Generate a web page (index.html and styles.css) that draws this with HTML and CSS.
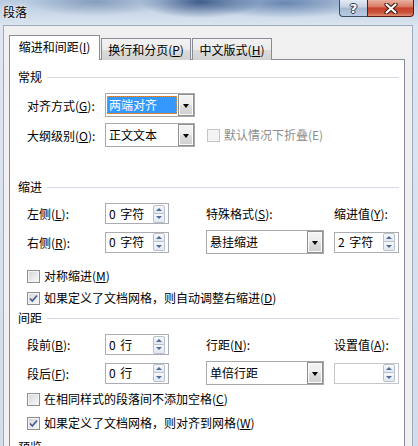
FILE: index.html
```html
<!DOCTYPE html>
<html lang="zh-CN">
<head>
<meta charset="utf-8">
<title>段落</title>
<link rel="stylesheet" href="styles.css">
</head>
<body>
<div class="window">
  <div class="titlebar">
    <span class="title">段落</span>
    <div class="caption-btns">
      <div class="cbtn help">?</div>
      <div class="cbtn close">
        <svg width="14" height="11" viewBox="0 0 14 11"><path d="M2.5 1.5 L11.5 9.5 M11.5 1.5 L2.5 9.5" stroke="#3a1810" stroke-width="4.2" stroke-linecap="round"/><path d="M2.5 1.5 L11.5 9.5 M11.5 1.5 L2.5 9.5" stroke="#ffffff" stroke-width="2.2" stroke-linecap="round"/></svg>
      </div>
    </div>
  </div>
  <div class="client">
    <div class="tabs">
      <div class="tab active">缩进和间距(<u>I</u>)</div>
      <div class="tab t2">换行和分页(<u>P</u>)</div>
      <div class="tab t3">中文版式(<u>H</u>)</div>
    </div>
    <div class="panel">
      <div class="sec-head h1"><span>常规</span><i class="rule"></i></div>
      <div class="rows">
        <div class="row r1">
          <span class="lbl">对齐方式(<u>G</u>):</span>
          <div class="combo w90"><span class="sel">两端对齐</span><span class="dd"><i class="tri"></i></span></div>
        </div>
        <div class="row r2">
          <span class="lbl">大纲级别(<u>O</u>):</span>
          <div class="combo w90"><span class="val">正文文本</span><span class="dd"><i class="tri"></i></span></div>
          <span class="cb disabled"></span><span class="cbtext dis">默认情况下折叠(E)</span>
        </div>
      </div>

      <div class="sec-head h2"><span>缩进</span><i class="rule"></i></div>
      <div class="rows">
        <div class="grid g1">
          <span class="lbl c1">左侧(<u>L</u>):</span>
          <div class="spin c2"><span class="val">0 字符</span><span class="sbs"><span class="sb"><i class="up"></i></span><span class="sb"><i class="down"></i></span></span></div>
          <span class="lbl c4">特殊格式(<u>S</u>):</span>
          <span class="lbl c6">缩进值(<u>Y</u>):</span>
          <span class="lbl c1">右侧(<u>R</u>):</span>
          <div class="spin c2"><span class="val">0 字符</span><span class="sbs"><span class="sb"><i class="up"></i></span><span class="sb"><i class="down"></i></span></span></div>
          <div class="combo c4 w118"><span class="val">悬挂缩进</span><span class="dd"><i class="tri"></i></span></div>
          <div class="spin c6"><span class="val">2 字符</span><span class="sbs"><span class="sb"><i class="up"></i></span><span class="sb"><i class="down"></i></span></span></div>
        </div>
        <div class="cbrow m14"><span class="cb"></span><span class="cbtext">对称缩进(<u>M</u>)</span></div>
        <div class="cbrow m6"><span class="cb checked"><svg width="11" height="11" viewBox="0 0 11 11"><path d="M2 5.5 L4.3 8 L9 2.5" fill="none" stroke="#4a5f92" stroke-width="1.8"/></svg></span><span class="cbtext">如果定义了文档网格，则自动调整右缩进(<u>D</u>)</span></div>
      </div>

      <div class="sec-head h3"><span>间距</span><i class="rule"></i></div>
      <div class="rows">
        <div class="grid g2">
          <span class="lbl c1">段前(<u>B</u>):</span>
          <div class="spin c2"><span class="val">0 行</span><span class="sbs"><span class="sb"><i class="up"></i></span><span class="sb"><i class="down"></i></span></span></div>
          <span class="lbl c4">行距(<u>N</u>):</span>
          <span class="lbl c6">设置值(<u>A</u>):</span>
          <span class="lbl c1">段后(<u>F</u>):</span>
          <div class="spin c2"><span class="val">0 行</span><span class="sbs"><span class="sb"><i class="up"></i></span><span class="sb"><i class="down"></i></span></span></div>
          <div class="combo c4 w118"><span class="val">单倍行距</span><span class="dd"><i class="tri"></i></span></div>
          <div class="spin c6 empty"><span class="val"></span><span class="sbs"><span class="sb"><i class="up"></i></span><span class="sb"><i class="down"></i></span></span></div>
        </div>
        <div class="cbrow m6"><span class="cb"></span><span class="cbtext">在相同样式的段落间不添加空格(<u>C</u>)</span></div>
        <div class="cbrow m8"><span class="cb checked"><svg width="11" height="11" viewBox="0 0 11 11"><path d="M2 5.5 L4.3 8 L9 2.5" fill="none" stroke="#4a5f92" stroke-width="1.8"/></svg></span><span class="cbtext">如果定义了文档网格，则对齐到网格(<u>W</u>)</span></div>
      </div>

      <div class="sec-head h4"><span>预览</span><i class="rule"></i></div>
    </div>
  </div>
</div>
</body>
</html>
```
FILE: styles.css
```css
* { box-sizing: border-box; }

body {
  margin: 0;
  font-family: "Noto Sans CJK SC", "Microsoft YaHei", sans-serif;
  font-size: 12px;
  line-height: 16px;
  color: #000;
}

u { text-decoration: underline; text-underline-offset: 1px; }

.window {
  width: 418px;
  height: 446px;
  overflow: hidden;
  background-color: #cdd9e8;
  background-image:
    radial-gradient(ellipse 60px 16px at 200px 2px, rgba(40, 72, 125, 0.85), rgba(40, 72, 125, 0)),
    radial-gradient(ellipse 85px 15px at 285px 3px, rgba(70, 105, 158, 0.7), rgba(70, 105, 158, 0)),
    radial-gradient(ellipse 70px 14px at 95px 2px, rgba(90, 120, 162, 0.55), rgba(90, 120, 162, 0)),
    linear-gradient(to bottom, #b8cae0 0px, #d1ddeb 18px, #dde6f1 26px, #d2dceb 100%);
}

.titlebar {
  height: 25px;
  display: flex;
  align-items: flex-start;
}

.title {
  padding: 4px 0 0 3px;
  line-height: 16px;
  color: #000;
  text-shadow: 0 0 4px #eef3fa, 0 0 2px #eef3fa;
}

.caption-btns {
  margin-left: auto;
  margin-right: 4px;
  display: flex;
}

.cbtn {
  height: 17px;
  border: 1px solid #3f4d60;
  border-top: none;
  display: flex;
  align-items: center;
  justify-content: center;
}

.help {
  width: 28px;
  border-right: none;
  border-radius: 0 0 0 4px;
  background: linear-gradient(#e3eaf3, #c3d1e2 45%, #a5b9d3 50%, #b7cbe4);
  color: #fff;
  font: bold 13px/15px "DejaVu Sans", sans-serif;
  text-shadow: 1px 0 0 #2b3548, -1px 0 0 #2b3548, 0 1px 0 #2b3548, 0 -1px 0 #2b3548;
}

.close {
  width: 47px;
  border-color: #5a1c11;
  border-radius: 0 0 4px 0;
  background: linear-gradient(#eab0a1, #d97a62 42%, #c5412a 50%, #cb533a 78%, #e08e74);
}

.client {
  margin-left: 3px;
  width: 410px;
  height: 421px;
  background: #f0f0f0;
  border: 1px solid #9daabb;
  border-bottom: none;
  padding: 9px 7px 0 5px;
}

.tabs {
  display: flex;
  align-items: flex-end;
  height: 25px;
}

.tab {
  border: 1px solid #898c95;
  border-bottom: none;
  text-align: center;
  white-space: nowrap;
}

.tab.active {
  width: 91px;
  height: 25px;
  background: #fff;
  position: relative;
  z-index: 1;
  padding-top: 3px;
}

.tab.t2, .tab.t3 {
  height: 22px;
  margin-left: 1px;
  padding-top: 3px;
  background: linear-gradient(#f2f2f2, #ebebeb 50%, #dddddd 50%, #d2d2d2);
}

.tab.t2 { width: 90px; }
.tab.t3 { width: 80px; }

.panel {
  margin-top: -1px;
  border: 1px solid #898c95;
  background: #fff;
  padding: 0 5px 0 8px;
  height: 420px;
}

.sec-head {
  display: flex;
  align-items: center;
  height: 16px;
}

.sec-head .rule {
  flex: 1;
  height: 1px;
  background: #d5dbe2;
  margin-left: 5px;
}

.h1 { margin-top: 9px; }
.h2 { margin-top: 32px; }
.h3 { margin-top: 4px; }
.h4 { margin-top: 8px; }

.rows { padding-left: 9px; }

.row {
  display: flex;
  align-items: center;
  height: 24px;
}

.r1 { margin-top: 8px; }
.r2 { margin-top: 6px; }

.lbl { width: 78px; white-space: nowrap; padding-top: 1px; }

.combo {
  height: 24px;
  border: 1px solid #a7a9ad;
  background: #fff;
  display: flex;
  align-items: center;
  padding-left: 1px;
}

.w90 { width: 90px; }
.w118 { width: 118px; }

.combo .sel {
  width: 70px;
  height: 18px;
  padding-left: 2px;
  line-height: 18px;
  background: #3399ff;
  color: #fff;
  outline: 1px dotted #e5913c;
  outline-offset: -1px;
}

.combo .val { padding-left: 2px; }

.combo .dd {
  margin-left: auto;
  width: 16px;
  height: 22px;
  border: 1px solid #8f8f8f;
  background: linear-gradient(#f4f4f4, #ececec 50%, #dedede 50%, #d0d0d0);
  box-shadow: inset 0 0 0 1px #fafafa;
  display: flex;
  align-items: center;
  justify-content: center;
}

.tri {
  width: 0;
  height: 0;
  border-left: 3.5px solid transparent;
  border-right: 3.5px solid transparent;
  border-top: 4px solid #000;
  margin-top: 1px;
}

.cb {
  width: 13px;
  height: 13px;
  border: 1px solid #8e8f8f;
  background: linear-gradient(135deg, #d2d4d8, #fbfbfb);
  box-shadow: inset 0 0 0 1px #f3f3f3;
  display: inline-flex;
  align-items: center;
  justify-content: center;
  flex: none;
}

.cb.disabled {
  border-color: #c6c6c6;
  background: #f4f4f4;
  box-shadow: none;
  margin-left: 12px;
}

.cbtext { margin-left: 4px; white-space: nowrap; }
.cbtext.dis { color: #8d8d8d; }

.cbrow {
  display: flex;
  align-items: center;
  height: 16px;
}

.m6 { margin-top: 6px; }
.m8 { margin-top: 8px; }
.m14 { margin-top: 14px; }

.grid {
  display: grid;
  grid-template-columns: 78px 64px 37px 118px 10px 65px;
  grid-template-rows: 21px 24px;
  row-gap: 6px;
  margin-top: 8px;
  align-items: center;
}

.c1 { grid-column: 1; }
.c2 { grid-column: 2; }
.c4 { grid-column: 4; }
.c6 { grid-column: 6; }

.spin {
  height: 21px;
  border: 1px solid #abadb3;
  background: #fff;
  display: flex;
  align-items: center;
  padding-left: 3px;
}

.spin .val { word-spacing: 2px; }

.spin.empty { border-color: #c3c6cb; }

.sbs {
  margin-left: auto;
  margin-right: 3px;
  width: 12px;
  display: flex;
  flex-direction: column;
}

.sb {
  height: 9px;
  border: 1px solid #b8c1cd;
  background: linear-gradient(#f7f9fb, #e2e8f0);
  display: flex;
  align-items: center;
  justify-content: center;
}

.sb + .sb { border-top: none; }
.sb:first-child { border-radius: 2px 2px 0 0; }
.sb:last-child { border-radius: 0 0 2px 2px; }

.up, .down {
  width: 0;
  height: 0;
  border-left: 3px solid transparent;
  border-right: 3px solid transparent;
}

.up { border-bottom: 3px solid #4f6ba0; }
.down { border-top: 3px solid #4f6ba0; }
```
